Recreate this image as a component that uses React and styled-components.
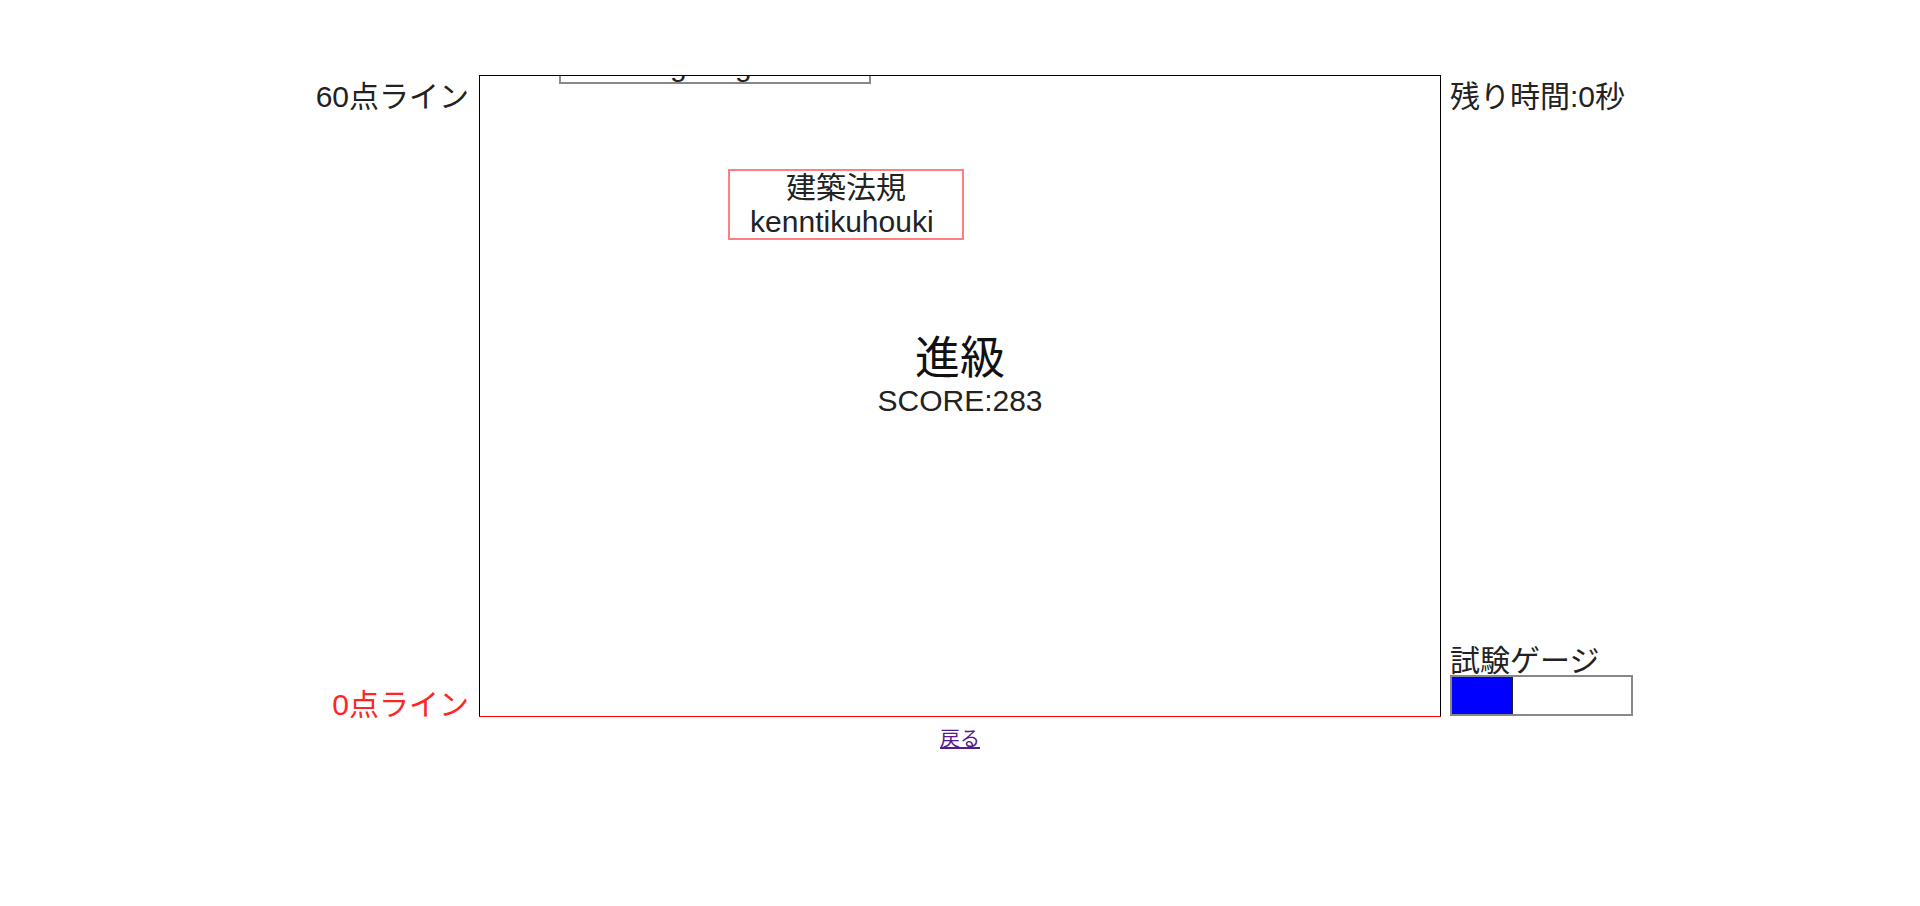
import React from 'react';
import styled, { createGlobalStyle } from 'styled-components';

const GlobalStyle = createGlobalStyle`
  body {
    margin: 8px;
    background: #fff;
    font-family: "Liberation Sans", "Noto Sans CJK JP", sans-serif;
    color: #222;
  }
`;

const Page = styled.div`
  padding-top: 67px;
`;

const Stage = styled.div`
  display: grid;
  grid-template-columns: 1fr 962px 1fr;
`;

const SideColumn = styled.div`
  display: flex;
  flex-direction: column;
  justify-content: space-between;
  align-items: ${(p) => (p.$right ? 'flex-start' : 'flex-end')};
  padding: ${(p) => (p.$right ? '0 0 0 9px' : '0 10px 0 0')};
`;

const Label = styled.div`
  font-size: 30px;
  line-height: 24px;
  white-space: nowrap;
  color: ${(p) => p.$color || '#222'};
  padding-top: ${(p) => (p.$top ? '10px' : '0')};
`;

const GaugeBlock = styled.div`
  display: flex;
  flex-direction: column;
  gap: 2px;
  margin-bottom: 1px;
`;

const Gauge = styled.div`
  width: 183px;
  height: 41px;
  box-sizing: border-box;
  border: 2px solid #888;
  display: flex;
`;

const GaugeFill = styled.div`
  height: 100%;
  background: #0000ff;
  box-sizing: border-box;
  border-right: 1px solid #222;
`;

const GameArea = styled.div`
  position: relative;
  height: 640px;
  border: 1px solid #000;
  border-bottom-color: #ff0000;
  overflow: hidden;
  display: flex;
  flex-direction: column;
  align-items: center;
`;

const WordBox = styled.div`
  position: absolute;
  box-sizing: border-box;
  width: ${(p) => p.$w}px;
  border: 2px solid ${(p) => (p.$active ? '#ff7f7f' : '#888')};
  text-align: center;
  font-size: 30px;
  line-height: 33.5px;
  white-space: pre;
  color: #222;
`;

const Result = styled.div`
  margin-top: 258px;
  text-align: center;
`;

const ResultTitle = styled.div`
  font-size: 45px;
  line-height: 50px;
  color: #111;
`;

const Score = styled.div`
  font-size: 30px;
  line-height: 34px;
  color: #222;
`;

const Footer = styled.div`
  display: grid;
  grid-template-columns: 1fr 962px 1fr;
`;

const BackLink = styled.a`
  grid-column: 2;
  justify-self: center;
  margin-top: 10px;
  font-size: 20px;
  line-height: 24px;
  color: #551a8b;
  text-decoration: underline;
`;

const words = [
  { jp: '工学技能', ro: 'kougakuginou', x: 79, y: -63, w: 312, active: false },
  { jp: '建築法規', ro: 'kenntikuhouki ', x: 248, y: 93, w: 236, active: true },
];

const gauge = 34;

export default function App() {
  return (
    <>
      <GlobalStyle />
      <Page>
        <Stage>
          <SideColumn>
            <Label $top>60点ライン</Label>
            <Label $color="#ff2525">0点ライン</Label>
          </SideColumn>

          <GameArea>
            {words.map((w) => (
              <WordBox
                key={w.ro}
                $w={w.w}
                $active={w.active}
                style={{ left: w.x, top: w.y }}
              >
                <div>{w.jp}</div>
                <div>{w.ro}</div>
              </WordBox>
            ))}
            <Result>
              <ResultTitle>進級</ResultTitle>
              <Score>SCORE:283</Score>
            </Result>
          </GameArea>

          <SideColumn $right>
            <Label $top>残り時間:0秒</Label>
            <GaugeBlock>
              <Label>試験ゲージ</Label>
              <Gauge>
                <GaugeFill style={{ width: `${gauge}%` }} />
              </Gauge>
            </GaugeBlock>
          </SideColumn>
        </Stage>
        <Footer>
          <BackLink href="#">戻る</BackLink>
        </Footer>
      </Page>
    </>
  );
}
